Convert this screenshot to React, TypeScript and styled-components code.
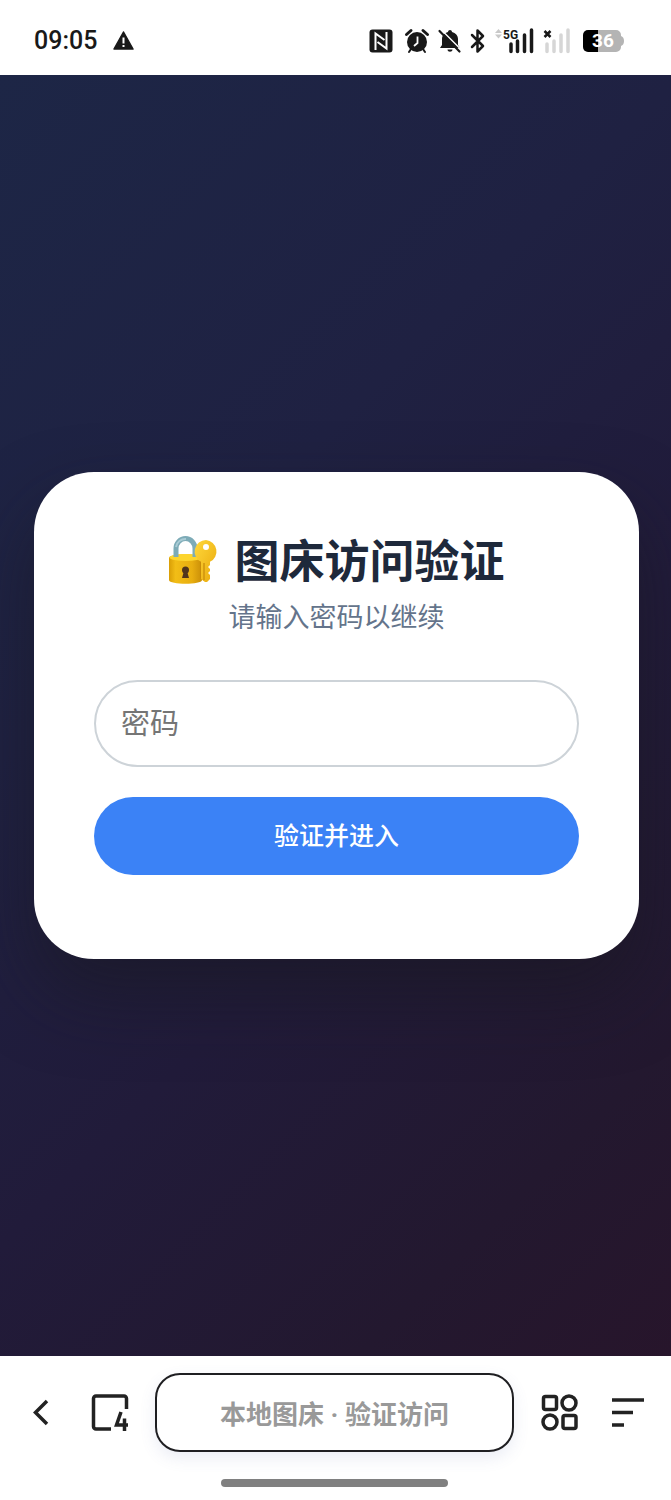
import React, { useState } from 'react';
import styled, { createGlobalStyle } from 'styled-components';

const GlobalStyle = createGlobalStyle`
  * { box-sizing: border-box; }
  body { margin: 0; background: #fff; font-family: Roboto, "Noto Sans CJK SC", sans-serif; }
  button, input { font-family: inherit; }
`;

const Screen = styled.div`
  display: flex;
  flex-direction: column;
  min-height: 100vh;
`;

const StatusBar = styled.header`
  display: flex;
  align-items: center;
  height: 75px;
  padding: 6px 46px 0 34px;
  color: #191919;
`;

const Clock = styled.time`
  font-size: 25px;
  line-height: 32px;
  font-weight: 500;
  margin-right: 16px;
`;

const StatusIcons = styled.div`
  display: flex;
  align-items: center;
  margin-left: auto;
`;

const StatusIcon = styled.svg<{ $gap?: number }>`
  display: block;
  flex: none;
  overflow: visible;
  margin-left: ${(p) => p.$gap ?? 0}px;
`;

const Page = styled.main`
  flex: 1;
  display: flex;
  align-items: center;
  justify-content: center;
  padding: 32px 32px 32px 34px;
  background: linear-gradient(135deg, #1d2646 0%, #1f2142 35%, #211b3a 60%, #23182f 84%, #27152b 100%);
`;

const Card = styled.section`
  width: 100%;
  padding: 60px;
  border-radius: 60px;
  background: #fff;
  box-shadow: 0 36px 72px rgba(24, 24, 30, 0.5);
  text-align: center;
`;

const Title = styled.h1`
  display: flex;
  align-items: flex-start;
  justify-content: center;
  gap: 16px;
  margin: 0;
  padding-top: 3px;
  font-size: 45px;
  line-height: 56px;
  font-weight: 700;
  color: #1e293b;
`;

const Subtitle = styled.p`
  margin: 7px 0 42px;
  font-size: 27px;
  line-height: 40px;
  color: #64748b;
`;

const Form = styled.form`
  display: flex;
  flex-direction: column;
  gap: 30px;
`;

const PasswordInput = styled.input`
  width: 100%;
  height: 87px;
  padding: 0 25px;
  border: 2px solid #cdd3d8;
  border-radius: 44px;
  background: #fff;
  font-size: 29px;
  color: #1e293b;
  outline: none;
  &::placeholder { color: #757575; opacity: 1; }
`;

const SubmitButton = styled.button`
  height: 78px;
  padding: 0 0 4px;
  border: 0;
  border-radius: 39px;
  background: #3b82f6;
  color: #fff;
  font-size: 25px;
  font-weight: 500;
`;

const Message = styled.p`
  min-height: 24px;
  margin: 0;
`;

const BottomBar = styled.footer`
  padding: 17px 24px 13px 22px;
  background: #fff;
`;

const NavRow = styled.nav`
  display: flex;
  align-items: center;
  color: #222;
`;

const NavButton = styled.button<{ $gap?: number }>`
  display: flex;
  flex: none;
  padding: 0;
  border: 0;
  background: none;
  color: inherit;
  margin-left: ${(p) => p.$gap ?? 0}px;
`;

const AddressPill = styled.button`
  flex: 1;
  height: 79px;
  margin-left: 25px;
  border: 2px solid #1f1f22;
  border-radius: 25px;
  background: #fff;
  box-shadow: 0 6px 16px rgba(90, 110, 170, 0.12);
  font-size: 26px;
  font-weight: 700;
  color: #999;
  white-space: nowrap;
`;

const HomeIndicator = styled.div`
  width: 227px;
  height: 8px;
  margin: 27px auto 0;
  border-radius: 4px;
  background: #808080;
`;

const LockWithKey = () => (
  <svg width="50" height="50" viewBox="0 0 50 50" aria-hidden="true">
    <defs>
      <linearGradient id="body" x1="0" x2="1" y1="0" y2="0">
        <stop offset="0" stopColor="#d99e06" />
        <stop offset="0.2" stopColor="#f2bd16" />
        <stop offset="0.7" stopColor="#e8ae10" />
        <stop offset="1" stopColor="#c98e08" />
      </linearGradient>
      <linearGradient id="key" x1="0" x2="1" y1="0" y2="1">
        <stop offset="0" stopColor="#ffd83b" />
        <stop offset="1" stopColor="#e9a90c" />
      </linearGradient>
    </defs>
    <path d="M1 23c0-5 33-5 33 0v22c0 5-33 5-33 0z" fill="url(#body)" />
    <ellipse cx="17.500" cy="22.500" rx="16" ry="3.500" fill="#fdd52d" />
    <path d="M8 22V13.500a9.500 10 0 0 1 19 0V22" fill="none" stroke="#7dabb7" strokeWidth="5" />
    <path d="M8 12a9.500 9.500 0 0 1 10-8" fill="none" stroke="#a9cbd5" strokeWidth="2" />
    <circle cx="17.500" cy="35" r="3.500" fill="#50351d" />
    <path d="M16 36h3l2 7h-7z" fill="#50351d" />
    <path d="M32 24h4v22l-4-3z" fill="#c98b0a" />
    <path fillRule="evenodd" d="M38 5a11.500 11.500 0 0 0-5 21.800V44l4 3h2l3-3v-4l-2-2 2-2v-2l-2-2 2-2v-3.200A11.500 11.500 0 0 0 38 5zm0 4a3 3 0 1 1 0 6 3 3 0 0 1 0-6z" fill="url(#key)" />
    <path d="M36 28v17" stroke="#cf930d" strokeWidth="1.500" />
  </svg>
);

export default function App() {
  const [password, setPassword] = useState('');
  return (
    <Screen>
      <GlobalStyle />
      <StatusBar>
        <Clock>09:05</Clock>
        <StatusIcon width="21" height="19" viewBox="0 0 21 19">
          <path d="M10.500 1 20 18H1z" fill="#191919" stroke="#191919" strokeWidth="1.500" strokeLinejoin="round" />
          <path d="M10.500 6.500v6M10.500 14v2" stroke="#fff" strokeWidth="2" />
        </StatusIcon>
        <StatusIcons>
          <StatusIcon width="24" height="24" viewBox="0 0 24 24">
            <rect x="0.500" y="0.500" width="23" height="23" rx="3" fill="#191919" />
            <path d="M6.500 21V4.500l9 6.500" fill="none" stroke="#fff" strokeWidth="2" />
            <path d="M17.500 3v16.500L8.500 13" fill="none" stroke="#fff" strokeWidth="2" />
          </StatusIcon>
          <StatusIcon $gap={12} width="24" height="24" viewBox="0 0 24 24">
            <circle cx="12" cy="13" r="10" fill="#191919" />
            <path d="M1.500 5.500 6 1.500M22.500 5.500 18 1.500" stroke="#191919" strokeWidth="3" strokeLinecap="round" />
            <path d="m6 20-2 3M18 20l2 3" stroke="#191919" strokeWidth="2" strokeLinecap="round" />
            <path d="M12.500 7.500V14L9 17" fill="none" stroke="#fff" strokeWidth="1.800" />
          </StatusIcon>
          <StatusIcon $gap={9} width="24" height="24" viewBox="0 0 24 24">
            <path d="M12 1c1 0 2 .8 2 2 3.500 1 6 3.500 6 7v6l2 3H2l2-3v-6c0-3.500 2.500-6 6-7 0-1.200 1-2 2-2zM9.500 20.500h5c0 3-5 3-5 0z" fill="#191919" />
            <path d="M3.500 1 24 21.500" stroke="#fff" strokeWidth="1.500" />
            <path d="m1.500 2 20 20.500" stroke="#191919" strokeWidth="2.200" strokeLinecap="round" />
          </StatusIcon>
          <StatusIcon $gap={8} width="16" height="24" viewBox="0 0 16 24">
            <path d="m2 6 11 11-5.500 5.500v-21L13 7 2 18" fill="none" stroke="#191919" strokeWidth="2.500" strokeLinejoin="round" strokeLinecap="round" />
          </StatusIcon>
          <StatusIcon $gap={9} width="40" height="24" viewBox="0 0 40 24">
            <path d="m3.500 0 3.500 4H0zM3.500 9.500 7 5.500H0z" fill="#c9c9c9" />
            <text x="8" y="10" fontSize="12" fontWeight="700" fill="#191919">5G</text>
            <path d="M16 15v7.500M22.500 12v10.500M29.500 6v16.500M36.500 1v21.500" stroke="#191919" strokeWidth="3.500" strokeLinecap="round" />
          </StatusIcon>
          <StatusIcon $gap={8} width="28" height="24" viewBox="0 0 28 24">
            <path d="m1.500 2 6 6M7.500 2l-6 6" stroke="#191919" strokeWidth="2.500" />
            <path d="M4 15v7.500M11 12v10.500M18 6v16.500M25 1v21.500" stroke="#d6d6d6" strokeWidth="3.500" strokeLinecap="round" />
          </StatusIcon>
          <StatusIcon $gap={12} width="42" height="22" viewBox="0 0 42 22">
            <path d="M5 0h10v22H5a5 5 0 0 1-5-5V5a5 5 0 0 1 5-5z" fill="#000" />
            <path d="M15 0h18a5 5 0 0 1 5 5v1q3 1 3 5t-3 5v1a5 5 0 0 1-5 5H15z" fill="#b4b4b4" />
            <text x="20" y="17" textAnchor="middle" fontSize="19" fontWeight="700" fill="#fff">36</text>
          </StatusIcon>
        </StatusIcons>
      </StatusBar>

      <Page>
        <Card>
          <Title><LockWithKey />图床访问验证</Title>
          <Subtitle>请输入密码以继续</Subtitle>
          <Form onSubmit={(e) => e.preventDefault()}>
            <PasswordInput
              type="password"
              aria-label="密码"
              placeholder="密码"
              value={password}
              onChange={(e) => setPassword(e.target.value)}
            />
            <SubmitButton type="submit">验证并进入</SubmitButton>
          </Form>
          <Message role="alert" />
        </Card>
      </Page>

      <BottomBar>
        <NavRow>
          <NavButton aria-label="返回">
            <svg width="40" height="40" viewBox="0 0 40 40" fill="none" stroke="currentColor" strokeWidth="3.500">
              <path d="M25 8 13.500 19.500 25 31" />
            </svg>
          </NavButton>
          <NavButton $gap={28} aria-label="标签页">
            <svg width="40" height="40" viewBox="0 0 40 40" fill="none" stroke="currentColor" strokeWidth="3.500">
              <path d="M21 36H6a2.500 2.500 0 0 1-2.500-2.500V5.500A2.500 2.500 0 0 1 6 3h28a2.500 2.500 0 0 1 2.500 2.500V16" />
              <path d="M31 19 26.500 32H38M34.500 25.500V38" />
            </svg>
          </NavButton>
          <AddressPill>本地图床 · 验证访问</AddressPill>
          <NavButton $gap={26} aria-label="应用">
            <svg width="40" height="40" viewBox="0 0 40 40" fill="none" stroke="currentColor" strokeWidth="3.500">
              <rect x="3.500" y="3.500" width="13" height="13" rx="2" />
              <circle cx="29" cy="10" r="7" />
              <circle cx="10" cy="29" r="7" />
              <rect x="23" y="22.500" width="13" height="13" rx="2" />
            </svg>
          </NavButton>
          <NavButton $gap={30} aria-label="菜单">
            <svg width="37" height="40" viewBox="0 0 37 40" fill="none" stroke="currentColor" strokeWidth="3.500">
              <path d="M2 7h32M2 19.500h21M2 32h12" />
            </svg>
          </NavButton>
        </NavRow>
        <HomeIndicator />
      </BottomBar>
    </Screen>
  );
}
